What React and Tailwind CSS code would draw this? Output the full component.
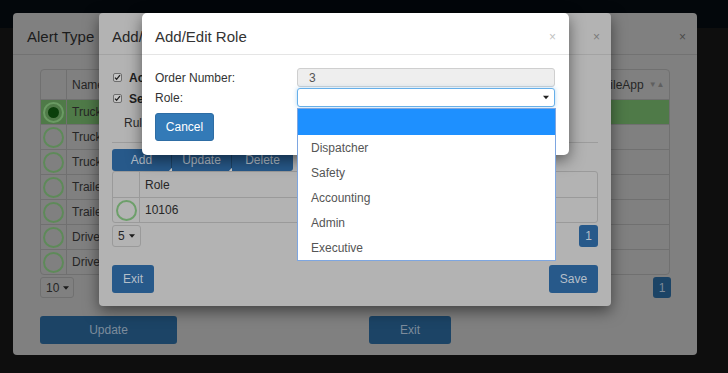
import React from "react";

const Caret = ({ c = "#000", w = 7, h = 4 }) => (
  <svg width={w} height={h} viewBox="0 0 7 4" className="inline-block">
    <path d="M0 0h7L3.5 4z" fill={c} />
  </svg>
);

const Check = () => (
  <span className="inline-flex w-[9px] h-[9px] items-center justify-center rounded-[2px] border border-[#6d6d6d] bg-[#c4c4c4]">
    <svg width="7" height="7" viewBox="0 0 7 7">
      <path d="M1 3.6l1.6 1.7L6 1.2" stroke="#1e1e1e" strokeWidth="1.3" fill="none" />
    </svg>
  </span>
);

function M1Row({ name, selected }) {
  return (
    <div
      className={
        "grid grid-cols-[26px_1fr_87px] h-[25px] border-t border-[#707070] " +
        (selected ? "bg-[#4f7a48]" : "")
      }
    >
      <div className="flex items-center justify-center border-r border-[#707070]">
        {selected ? (
          <span className="w-[21px] h-[21px] rounded-full border-2 border-[#6a9a63] flex items-center justify-center">
            <span className="w-[11px] h-[11px] rounded-full bg-[#0b3f0b]" />
          </span>
        ) : (
          <span className="w-[21px] h-[21px] rounded-full border-2 border-[#5e8a59]" />
        )}
      </div>
      <div className="flex items-center pl-[5px] text-[#262626]">{name}</div>
      <div className="flex items-center pl-[5px] text-[#262626]"></div>
    </div>
  );
}

export default function App() {
  const m1rows = ["Truck", "Truck", "Truck", "Trailer", "Trailer", "Driver", "Driver"];
  const roles = ["Dispatcher", "Safety", "Accounting", "Admin", "Executive"];
  return (
    <div className="relative w-[728px] h-[373px] overflow-hidden bg-[#0e0e0e] font-['Liberation_Sans',Arial,sans-serif] text-[12px] leading-none">
      <div className="h-[28px] bg-[#03070b]" />

      {/* Modal 1 : Alert Type */}
      <div className="absolute left-[13px] top-[13px] w-[684px] h-[342px] bg-[#808080] rounded-[4px]">
        <div className="h-[42px] flex items-center justify-between pl-[14px] pr-[11px] pt-[6px] border-b border-[#727272]">
          <span className="text-[15px] text-[#1c1c1c]">Alert Type</span>
          <span className="text-[12px] text-[#4a4a4a]">×</span>
        </div>
        <div className="px-[27px] pt-[14px]">
          <div className="w-[630px] border border-[#707070] rounded-[4px]">
            <div className="grid grid-cols-[26px_1fr_87px] h-[29px]">
              <div className="border-r border-[#707070]" />
              <div className="flex items-center pl-[5px] text-[#262626]">Name</div>
              <div className="flex items-center pl-[5px] text-[#262626]">
                MobileApp
                <span className="ml-[5px] text-[8px] text-[#5f5f5f]">▼▲</span>
              </div>
            </div>
            {m1rows.map((r, i) => (
              <M1Row key={i} name={r} selected={i === 0} />
            ))}
          </div>
          <div className="w-[631px] flex justify-between mt-[2px]">
            <div className="h-[21px] w-[34px] border border-[#707070] rounded-[3px] flex items-center pl-[5px] gap-[4px] text-[#262626]">
              10 <Caret c="#1c1c1c" w={6} />
            </div>
            <div className="h-[21px] w-[18px] rounded-[3px] bg-[#1c4466] flex items-center justify-center text-[#7c8a98]">
              1
            </div>
          </div>
          <div className="flex mt-[18px]">
            <div className="w-[137px] h-[28px] rounded-[3px] bg-[#1c4466] flex items-center justify-center text-[#7d8c9c]">
              Update
            </div>
            <div className="ml-[192px] w-[82px] h-[28px] rounded-[3px] bg-[#1c4466] flex items-center justify-center text-[#7d8c9c]">
              Exit
            </div>
          </div>
        </div>
      </div>

      {/* Modal 2 : Add/Edit Alert Type */}
      <div className="absolute left-[99px] top-[13px] w-[512px] h-[293px] bg-[#b3b3b3] rounded-[4px] shadow-[0_5px_15px_rgba(0,0,0,0.5)]">
        <div className="h-[42px] flex items-center justify-between pl-[13px] pr-[11px] pt-[6px] border-b border-[#a3a3a3]">
          <span className="text-[15px] text-[#262626]">Add/Edit</span>
          <span className="text-[12px] text-[#7a7a7a]">×</span>
        </div>
        <div className="px-[13px] pt-[12px]">
          <div className="h-[21px] flex items-center gap-[7px] pl-[1px]">
            <Check />
            <span className="font-bold text-[#1e1e1e]">Active</span>
          </div>
          <div className="h-[21px] flex items-center gap-[7px] pl-[1px]">
            <Check />
            <span className="font-bold text-[#1e1e1e]">Send</span>
          </div>
          <div className="h-[20px] mt-[4px] flex items-center pl-[12px] text-[#2a2a2a]">Rules</div>
          <div className="mt-[9px] border-t border-[#9c9c9c]" />
          <div className="mt-[6px] flex h-[22px]">
            {["Add", "Update", "Delete"].map((b, i) => (
              <div
                key={b}
                className={
                  "relative flex items-center justify-center bg-[#27598a] text-[#b5bfc9] " +
                  (i === 0 ? "w-[60px] rounded-l-[3px] border-r border-[#1d4468]" : "") +
                  (i === 1 ? "w-[60px] border-r border-[#1d4468]" : "") +
                  (i === 2 ? "w-[61px] rounded-r-[3px]" : "")
                }
              >
                {b}
                {i < 2 && (
                  <svg width="5" height="3" viewBox="0 0 5 3" className="absolute right-[-3px] bottom-0">
                    <path d="M0 3L2.5 0 5 3z" fill="#c9c9c9" />
                  </svg>
                )}
              </div>
            ))}
          </div>
          <div className="border border-[#9a9a9a] rounded-[3px]">
            <div className="grid grid-cols-[27px_1fr] h-[25px]">
              <div className="border-r border-[#9a9a9a]" />
              <div className="flex items-center pl-[5px] text-[#262626]">Role</div>
            </div>
            <div className="grid grid-cols-[27px_1fr] h-[25px] border-t border-[#9a9a9a]">
              <div className="flex items-center justify-center border-r border-[#9a9a9a]">
                <span className="w-[21px] h-[21px] rounded-full border-2 border-[#6d9f6a]" />
              </div>
              <div className="flex items-center pl-[5px] text-[#262626]">10106</div>
            </div>
          </div>
          <div className="flex justify-between mt-[2px]">
            <div className="h-[22px] w-[29px] border border-[#9a9a9a] rounded-[3px] flex items-center pl-[5px] gap-[4px] text-[#262626]">
              5 <Caret c="#1c1c1c" w={6} />
            </div>
            <div className="h-[22px] w-[19px] rounded-[3px] bg-[#27598a] flex items-center justify-center text-[#b5bfc9]">
              1
            </div>
          </div>
          <div className="flex justify-between mt-[18px]">
            <div className="w-[42px] h-[28px] rounded-[3px] bg-[#27598a] flex items-center justify-center text-[#b5bfc9]">
              Exit
            </div>
            <div className="w-[49px] h-[28px] rounded-[3px] bg-[#27598a] flex items-center justify-center text-[#b5bfc9]">
              Save
            </div>
          </div>
        </div>
      </div>

      {/* Modal 3 : Add/Edit Role */}
      <div className="absolute left-[142px] top-[13px] w-[427px] h-[142px] bg-white rounded-[5px] shadow-[0_5px_15px_rgba(0,0,0,0.5)]">
        <div className="h-[42px] flex items-center justify-between pl-[13px] pr-[13px] pt-[6px] border-b border-[#e5e5e5]">
          <span className="text-[15px] text-[#333]">Add/Edit Role</span>
          <span className="text-[12px] text-[#c2c2c2]">×</span>
        </div>
        <div className="px-[13px] pt-[13px]">
          <div className="flex h-[20px] items-start">
            <div className="w-[142px] h-[19px] flex items-center text-[#333]">Order Number:</div>
            <div className="w-[258px] h-[19px] rounded-[3px] border border-[#cfcfcf] bg-[#eeeeee] flex items-center pl-[11px] text-[#555]">
              3
            </div>
          </div>
          <div className="flex h-[20px] items-start">
            <div className="w-[142px] h-[19px] flex items-center text-[#333]">Role:</div>
            <div className="w-[258px] h-[19px] rounded-[3px] border border-[#66afe9] bg-white shadow-[0_0_4px_rgba(102,175,233,0.5)] flex items-center justify-end pr-[5px]">
              <Caret c="#222" w={6} h={5} />
            </div>
          </div>
          <div className="mt-[5px] w-[59px] h-[28px] rounded-[3px] bg-[#337ab7] border border-[#2e6da4] flex items-center justify-center text-white">
            Cancel
          </div>
        </div>
      </div>

      {/* Dropdown list */}
      <div className="absolute left-[297px] top-[108px] w-[259px] bg-white border border-[#7ea6e0]">
        <div className="h-[26px] bg-[#1e90ff]" />
        {roles.map((r) => (
          <div key={r} className="h-[25px] flex items-center pl-[13px] text-[#555]">
            {r}
          </div>
        ))}
      </div>
    </div>
  );
}
